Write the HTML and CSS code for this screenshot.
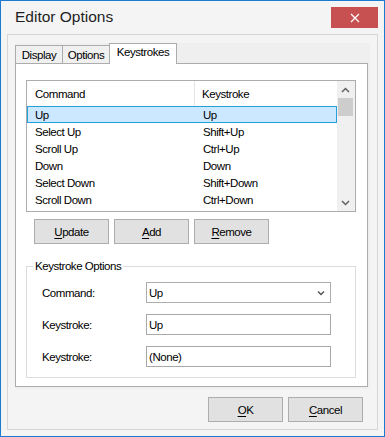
FILE: index.html
```html
<!DOCTYPE html>
<html>
<head>
<meta charset="utf-8">
<link rel="stylesheet" href="styles.css">
</head>
<body>
<div class="window">
  <div class="titlebar">
    <span class="title">Editor Options</span>
    <div class="close"><svg width="10" height="10" viewBox="0 0 10 10"><path d="M1 1L9 9M9 1L1 9" stroke="#fff" stroke-width="1.2" fill="none"/></svg></div>
  </div>
  <div class="frame">
    <div class="tabctl">
      <div class="tabs">
        <div class="tab t-display">Display</div>
        <div class="tab t-options">Options</div>
        <div class="tab t-keys active">Keystrokes</div>
      </div>
      <div class="panel">
        <div class="listview">
          <div class="lv-main">
            <div class="lv-header"><div class="c1">Command</div><div class="c2">Keystroke</div></div>
            <div class="row sel"><div class="c1">Up</div><div class="c2">Up</div></div>
            <div class="row"><div class="c1">Select Up</div><div class="c2">Shift+Up</div></div>
            <div class="row"><div class="c1">Scroll Up</div><div class="c2">Ctrl+Up</div></div>
            <div class="row"><div class="c1">Down</div><div class="c2">Down</div></div>
            <div class="row"><div class="c1">Select Down</div><div class="c2">Shift+Down</div></div>
            <div class="row"><div class="c1">Scroll Down</div><div class="c2">Ctrl+Down</div></div>
          </div>
          <div class="vscroll">
            <div class="sb-btn"><svg width="9" height="6" viewBox="0 0 9 6"><path d="M1 5L4.5 1.5L8 5" stroke="#606060" stroke-width="1.5" fill="none"/></svg></div>
            <div class="sb-track"><div class="sb-thumb"></div></div>
            <div class="sb-btn"><svg width="9" height="6" viewBox="0 0 9 6"><path d="M1 1L4.5 4.5L8 1" stroke="#606060" stroke-width="1.5" fill="none"/></svg></div>
          </div>
        </div>
        <div class="btnrow">
          <div class="btn"><u>U</u>pdate</div>
          <div class="btn"><u>A</u>dd</div>
          <div class="btn"><u>R</u>emove</div>
        </div>
        <fieldset class="group">
          <legend>Keystroke Options</legend>
          <div class="frow">
            <span class="flabel">Command:</span>
            <div class="combo"><span>Up</span><svg width="8" height="6" viewBox="0 0 8 6"><path d="M1 1.5L4 4.5L7 1.5" stroke="#555" stroke-width="1.5" fill="none"/></svg></div>
          </div>
          <div class="frow">
            <span class="flabel">Keystroke:</span>
            <div class="edit">Up</div>
          </div>
          <div class="frow">
            <span class="flabel">Keystroke:</span>
            <div class="edit">(None)</div>
          </div>
        </fieldset>
      </div>
    </div>
    <div class="footer">
      <div class="btn"><u>O</u>K</div>
      <div class="btn"><u>C</u>ancel</div>
    </div>
  </div>
</div>
</body>
</html>
```
FILE: styles.css
```css
* { box-sizing: border-box; }
html, body { margin: 0; padding: 0; background: #fff; }
body {
  font-family: "Liberation Sans", Arial, sans-serif;
  font-size: 11.5px;
  letter-spacing: -0.45px;
  color: #000;
}
.window {
  width: 385px;
  height: 437px;
  border: 1px solid #1a7bd0;
  background: #f4f4f4;
  display: flex;
  flex-direction: column;
}
.titlebar {
  height: 33px;
  display: flex;
  align-items: flex-start;
  justify-content: space-between;
  padding-left: 14px;
}
.title {
  font-size: 15.5px;
  letter-spacing: 0;
  line-height: 18px;
  margin-top: 7px;
  color: #1e1e1e;
}
.close {
  width: 47px;
  height: 21px;
  margin-top: 6px;
  margin-right: 6px;
  background: #c75050;
  display: flex;
  align-items: center;
  justify-content: center;
}
.close svg { display: block; }
.frame {
  margin: 0 6px;
  height: 396px;
  border: 1px solid #d6d6d6;
  display: flex;
  flex-direction: column;
  padding-top: 8px;
}
.tabctl {
  margin-left: 7px;
  width: 355px;
  height: 346px;
  background: #efefef;
}
.tabs {
  height: 20px;
  display: flex;
  align-items: flex-end;
}
.tab {
  height: 18px;
  border: 1px solid #acacac;
  border-bottom: none;
  background: #f0f0f0;
  text-align: center;
  line-height: 16px;
  padding-top: 1px;
}
.t-display { width: 48px; }
.t-options { width: 48px; margin-left: -1px; }
.t-keys { width: 68px; margin-left: -1px; }
.tab.active {
  height: 21px;
  margin-bottom: -1px;
  background: #fff;
  position: relative;
  z-index: 1;
  padding-top: 0;
}
.panel {
  width: 353px;
  height: 324px;
  border: 1px solid #acacac;
  background: #fff;
  padding: 16px 0 0 10px;
}
.listview {
  width: 330px;
  height: 132px;
  border: 1px solid #acacac;
  display: flex;
  overflow: hidden;
}
.lv-main {
  width: 310px;
  overflow: hidden;
}
.lv-header {
  height: 25px;
  display: flex;
  align-items: stretch;
}
.lv-header .c1 {
  border-right: 1px solid #e5e5e5;
}
.c1, .c2 {
  display: flex;
  align-items: center;
  white-space: nowrap;
}
.c1 { width: 168px; padding-left: 8px; }
.c2 { padding-left: 7px; }
.row {
  height: 17px;
  display: flex;
  border: 1px solid transparent;
}
.row .c1 { padding-left: 7px; }
.row.sel {
  background: #cce8ff;
  border-color: #26a0da;
}
.vscroll {
  width: 18px;
  background: #f0f0f0;
  display: flex;
  flex-direction: column;
}
.sb-btn {
  height: 17px;
  display: flex;
  align-items: center;
  justify-content: center;
  padding-right: 1px;
}
.sb-track { flex: 1; padding: 0 1px 0 1px; }
.sb-thumb { height: 18px; background: #cdcdcd; margin-right: 1px; }
.btnrow {
  display: flex;
  gap: 5px;
  margin: 7px 0 0 8px;
}
.btn {
  width: 75px;
  height: 25px;
  border: 1px solid #adadad;
  background: #e1e1e1;
  display: flex;
  align-items: center;
  justify-content: center;
}
.btn u { text-decoration: underline; text-decoration-thickness: 1px; text-underline-offset: 2px; }
.group {
  margin: 15px 0 0 0;
  width: 330px;
  border: 1px solid #dcdcdc;
  padding: 9px 0 10px 15px;
}
.group legend {
  padding: 0 2px;
  margin-left: -9px;
  line-height: 14px;
}
.frow {
  display: flex;
  align-items: center;
  height: 21px;
  margin-bottom: 11px;
}
.frow:last-child { margin-bottom: 0; }
.flabel { width: 104px; }
.combo, .edit {
  width: 185px;
  height: 21px;
  border: 1px solid #adadad;
  background: #fff;
  display: flex;
  align-items: center;
  padding-left: 2px;
}
.combo { justify-content: space-between; padding-right: 5px; }
.edit { border-color: #a9a9a9; }
.footer {
  display: flex;
  justify-content: flex-end;
  gap: 5px;
  margin-top: 8px;
  padding-right: 14px;
}
```
